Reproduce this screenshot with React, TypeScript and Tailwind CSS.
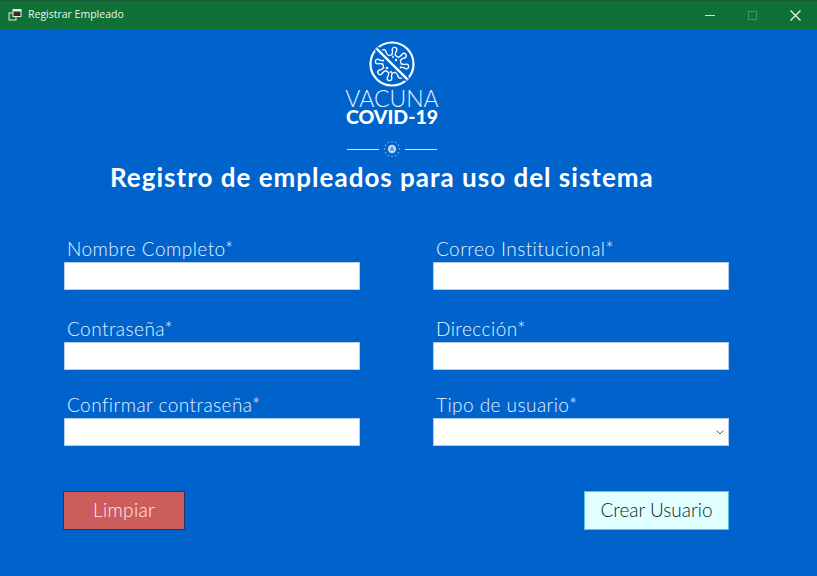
import React from "react";

const font = "font-['Lato','Liberation_Sans',sans-serif]";

function AppIcon() {
  return (
    <svg width="14" height="14" viewBox="0 0 14 14" className="shrink-0">
      <rect x="1" y="5" width="7" height="7" fill="none" stroke="#e6f2ea" strokeWidth="1" />
      <rect x="5" y="1.5" width="8" height="7" fill="#26302c" stroke="#e6f2ea" strokeWidth="1" />
      <rect x="5" y="1.5" width="8" height="2" fill="#e6f2ea" />
    </svg>
  );
}

function VirusShape({ color, grow }: { color: string; grow: number }) {
  const spikes = [10, 55, 100, 145, 190, 235, 280, 325];
  return (
    <g fill={color} stroke={color} strokeLinecap="round">
      <circle cx="23" cy="23" r={8.5 + grow} strokeWidth="0" />
      {spikes.map((a) => (
        <g key={a} transform={`rotate(${a} 23 23)`}>
          <path d="M23 15 V9.5" strokeWidth={2 + grow * 2} fill="none" />
          <circle cx="23" cy="8.5" r={1.7 + grow} strokeWidth="0" />
        </g>
      ))}
    </g>
  );
}

function Virus() {
  return (
    <svg width="46" height="46" viewBox="0 0 46 46" className="block">
      <circle cx="23" cy="23" r="21.5" fill="none" stroke="white" strokeWidth="2.2" />
      <VirusShape color="white" grow={1.3} />
      <VirusShape color="#0063cc" grow={0} />
      <circle cx="18" cy="27" r="1.3" fill="white" />
      <circle cx="22" cy="31" r="1" fill="white" />
      <circle cx="27" cy="19" r="1.2" fill="white" />
      <circle cx="24" cy="16" r="0.9" fill="white" />
      <path d="M7.5 7.5 L38.5 38.5" stroke="#0063cc" strokeWidth="5.5" />
      <path d="M7.6 7.6 L38.4 38.4" stroke="white" strokeWidth="2.2" />
    </svg>
  );
}

function Seal() {
  const dots = Array.from({ length: 12 }, (_, i) => i * 30);
  return (
    <svg width="18" height="18" viewBox="0 0 18 18" className="block">
      {dots.map((a) => (
        <circle key={a} cx="9" cy="1.5" r="0.7" fill="#9cc6f2" transform={`rotate(${a} 9 9)`} />
      ))}
      <circle cx="9" cy="9" r="4.2" fill="#b9d8f8" />
      <path d="M9 6.5 L11.2 10.5 H6.8 Z" fill="#4a8ad4" />
    </svg>
  );
}

function Field({ label, select }: { label: string; select?: boolean }) {
  return (
    <div className="flex w-[296px] flex-col">
      <div className="h-[24px] pl-[3px] text-[19px] leading-[21px] font-light tracking-[0.45px] text-[#e6f3ff] whitespace-nowrap">
        {label}
      </div>
      <div className="flex h-[28px] items-center justify-end border border-[#b5cde8] bg-white pr-[3px]">
        {select && (
          <svg width="10" height="10" viewBox="0 0 10 10">
            <path d="M1.5 3.5 L5 7 L8.5 3.5" fill="none" stroke="#555" strokeWidth="1" />
          </svg>
        )}
      </div>
    </div>
  );
}

export default function App() {
  return (
    <div className={`flex h-[576px] w-[817px] flex-col overflow-hidden bg-[#0063cc] ${font}`}>
      <div className="flex h-[29px] shrink-0 items-center border-t border-[#1d5c39] bg-[#0f7136] pl-[8px]">
        <AppIcon />
        <span className="ml-[6px] text-[10.5px] text-[#e9f5ee] font-['Open_Sans',sans-serif]">Registrar Empleado</span>
        <div className="ml-auto flex h-full items-center">
          <div className="flex w-[46px] justify-center pl-[3px]">
            <div className="h-px w-[10px] bg-[#cfe8d8]" />
          </div>
          <div className="flex w-[43px] justify-center">
            <div className="h-[9px] w-[9px] border border-[#3a9560]" />
          </div>
          <div className="flex w-[43px] justify-center">
            <svg width="11" height="11" viewBox="0 0 11 11">
              <path d="M0.5 0.5 L10.5 10.5 M10.5 0.5 L0.5 10.5" stroke="#eef7f1" strokeWidth="1.2" />
            </svg>
          </div>
        </div>
      </div>

      <div className="flex flex-col pl-[64px]">
        <div className="ml-[280px] flex w-[96px] flex-col items-center pt-[12px] text-white">
          <Virus />
          <div className="mt-[2px] text-[23px] leading-[18px] font-light text-[#e6f2ff]">VACUNA</div>
          <div className="mt-[2px] text-[19.5px] leading-[15px] font-black whitespace-nowrap">COVID-19</div>
          <div className="mt-[16px] flex items-center gap-[4px]">
            <div className="h-px w-[32px] bg-[#d7e8fa]" />
            <Seal />
            <div className="h-px w-[32px] bg-[#d7e8fa]" />
          </div>
        </div>

        <h1 className="ml-[46px] mt-[3px] text-[26px] leading-[32px] font-bold whitespace-nowrap text-white tracking-[1px]">
          Registro de empleados para uso del sistema
        </h1>

        <div className="mt-[45px] grid w-[665px] grid-cols-[296px_296px] justify-between">
          <Field label="Nombre Completo*" />
          <Field label="Correo Institucional*" />
          <div className="mt-[28px]"><Field label="Contraseña*" /></div>
          <div className="mt-[28px]"><Field label="Dirección*" /></div>
          <div className="mt-[24px]"><Field label="Confirmar contraseña*" /></div>
          <div className="mt-[24px]"><Field label="Tipo de usuario*" select /></div>
        </div>

        <div className="mt-[45px] -ml-px flex w-[666px] justify-between">
          <div className="flex h-[39px] w-[122px] items-center justify-center border border-[#26346e] bg-[#cd5c5c] text-[19px] font-light tracking-[0.3px] text-[#ffecec]">
            Limpiar
          </div>
          <div className="flex h-[39px] w-[145px] items-center justify-center border border-[#57c6dd] bg-[#e0ffff] text-[19px] font-light text-[#101c1f]">
            Crear Usuario
          </div>
        </div>
      </div>
    </div>
  );
}
